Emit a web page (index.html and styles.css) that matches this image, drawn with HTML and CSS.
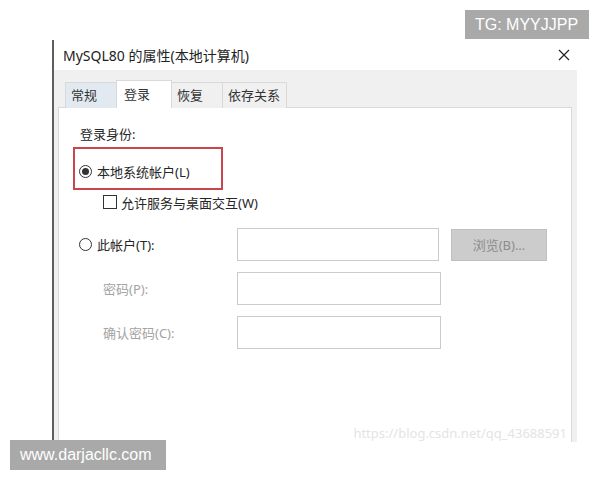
FILE: index.html
```html
<!DOCTYPE html>
<html lang="zh-CN">
<head>
    <meta charset="UTF-8">
    <meta name="viewport" content="width=device-width, initial-scale=1.0">
    <title>MySQL80 的属性(本地计算机)</title>
    <link rel="stylesheet" href="styles.css">
</head>
<body>
    <div class="dialog">
        <div class="titlebar">
            <span class="title">MySQL80 的属性(本地计算机)</span>
            <svg class="close" width="12" height="12" viewBox="0 0 12 12">
                <path d="M1 1L11 11M11 1L1 11" stroke="#222" stroke-width="1.2" fill="none"/>
            </svg>
        </div>
        <div class="dialog-body">
            <div class="tabs">
                <div class="tab tab-hover" style="width:52px">常规</div>
                <div class="tab active" style="width:56px">登录</div>
                <div class="tab" style="width:52px">恢复</div>
                <div class="tab" style="width:65px">依存关系</div>
            </div>
            <div class="panel">
                <div class="group-label">登录身份:</div>

                <div class="highlight">
                    <span class="radio checked"></span>
                    <span>本地系统帐户(L)</span>
                </div>

                <div class="check-row">
                    <span class="checkbox"></span>
                    <span>允许服务与桌面交互(W)</span>
                </div>

                <div class="field-row first">
                    <div class="field-label radio-label">
                        <span class="radio"></span>
                        <span>此帐户(T):</span>
                    </div>
                    <div class="input" style="width:202px"></div>
                    <div class="browse">浏览(B)...</div>
                </div>

                <div class="field-row">
                    <div class="field-label sub-label">密码(P):</div>
                    <div class="input" style="width:204px"></div>
                </div>

                <div class="field-row">
                    <div class="field-label sub-label">确认密码(C):</div>
                    <div class="input" style="width:204px"></div>
                </div>

                <div class="csdn">https://blog.csdn.net/qq_43688591</div>
            </div>
        </div>
    </div>

    <div class="tag tag-top">TG: MYYJJPP</div>
    <div class="tag tag-bottom">www.darjacllc.com</div>
</body>
</html>
```

FILE: styles.css
```css
body {
    margin: 0;
    background: #fff;
    font-family: "Noto Sans", "Noto Sans CJK SC", sans-serif;
    color: #262626;
}
.dialog {
    margin: 40px 0 0 52px;
    width: 523px;
    border-left: 2px solid #5e5e5e;
}
.titlebar {
    height: 30px;
    display: flex;
    align-items: center;
    justify-content: space-between;
    padding: 0 7px 0 9px;
    background: #fff;
}
.title {
    font-size: 14px;
    color: #222;
}
.dialog-body {
    background: #f0f0f0;
    height: 372px;
    padding: 10px 5px 0 4px;
    box-sizing: border-box;
    display: flex;
    flex-direction: column;
}
.tabs {
    display: flex;
    align-items: flex-end;
    padding-left: 7px;
    margin-bottom: -1px;
    position: relative;
}
.tab {
    height: 26px;
    box-sizing: border-box;
    border: 1px solid #d9d9d9;
    border-bottom: none;
    margin-left: -1px;
    padding-left: 5px;
    font-size: 13px;
    line-height: 25px;
    color: #333;
    background: #f0f0f0;
}
.tab-hover {
    background: #e2e9f1;
    margin-left: 0;
}
.active {
    height: 28px;
    background: #fff;
    padding-left: 7px;
    line-height: 26px;
}
.panel {
    flex: 1;
    background: #fff;
    border: 1px solid #d9d9d9;
    border-bottom: none;
    display: flex;
    flex-direction: column;
    font-size: 13px;
}
.group-label {
    margin: 17px 0 0 21px;
    line-height: 18px;
}
.highlight {
    margin: 4px 0 0 14px;
    width: 150px;
    height: 43px;
    box-sizing: border-box;
    border: 2px solid #c8454b;
    padding: 5px 0 0 4px;
    display: flex;
    align-items: center;
    gap: 5px;
}
.radio {
    width: 13px;
    height: 13px;
    box-sizing: border-box;
    border: 1px solid #333;
    border-radius: 50%;
    display: inline-flex;
    align-items: center;
    justify-content: center;
    flex: none;
}
.radio.checked::after {
    content: "";
    width: 7px;
    height: 7px;
    border-radius: 50%;
    background: #333;
}
.check-row {
    margin: 5px 0 0 44px;
    height: 14px;
    display: flex;
    align-items: center;
    gap: 4px;
}
.checkbox {
    width: 14px;
    height: 14px;
    box-sizing: border-box;
    border: 1px solid #333;
    flex: none;
}
.field-row {
    display: flex;
    align-items: center;
    height: 33px;
    margin-top: 11px;
}
.field-row.first {
    margin-top: 19px;
}
.field-label {
    width: 178px;
    box-sizing: border-box;
    flex: none;
}
.radio-label {
    padding-left: 20px;
    display: flex;
    align-items: center;
    gap: 5px;
}
.sub-label {
    padding-left: 44px;
    color: #a3a3a3;
}
.input {
    height: 33px;
    box-sizing: border-box;
    border: 1px solid #cbcbcb;
    background: #fff;
}
.browse {
    margin-left: 12px;
    width: 96px;
    height: 32px;
    box-sizing: border-box;
    border: 1px solid #bfbfbf;
    background: #cccccc;
    color: #8c8c8c;
    text-align: center;
    line-height: 30px;
}
.csdn {
    margin-top: auto;
    padding: 0 4px 0 0;
    text-align: right;
    color: #e4e4e4;
    font-size: 13px;
    line-height: 18px;
}
.tag {
    position: absolute;
    background: #a9a9a9;
    color: #fff;
    font-family: "Liberation Sans", Arial, sans-serif;
    font-size: 16px;
    line-height: 30px;
    padding: 0 10px;
}
.tag-top {
    top: 10px;
    left: 465px;
    width: 124px;
    box-sizing: border-box;
    line-height: 29px;
}
.tag-bottom {
    top: 440px;
    left: 10px;
    width: 156px;
    box-sizing: border-box;
}
```
